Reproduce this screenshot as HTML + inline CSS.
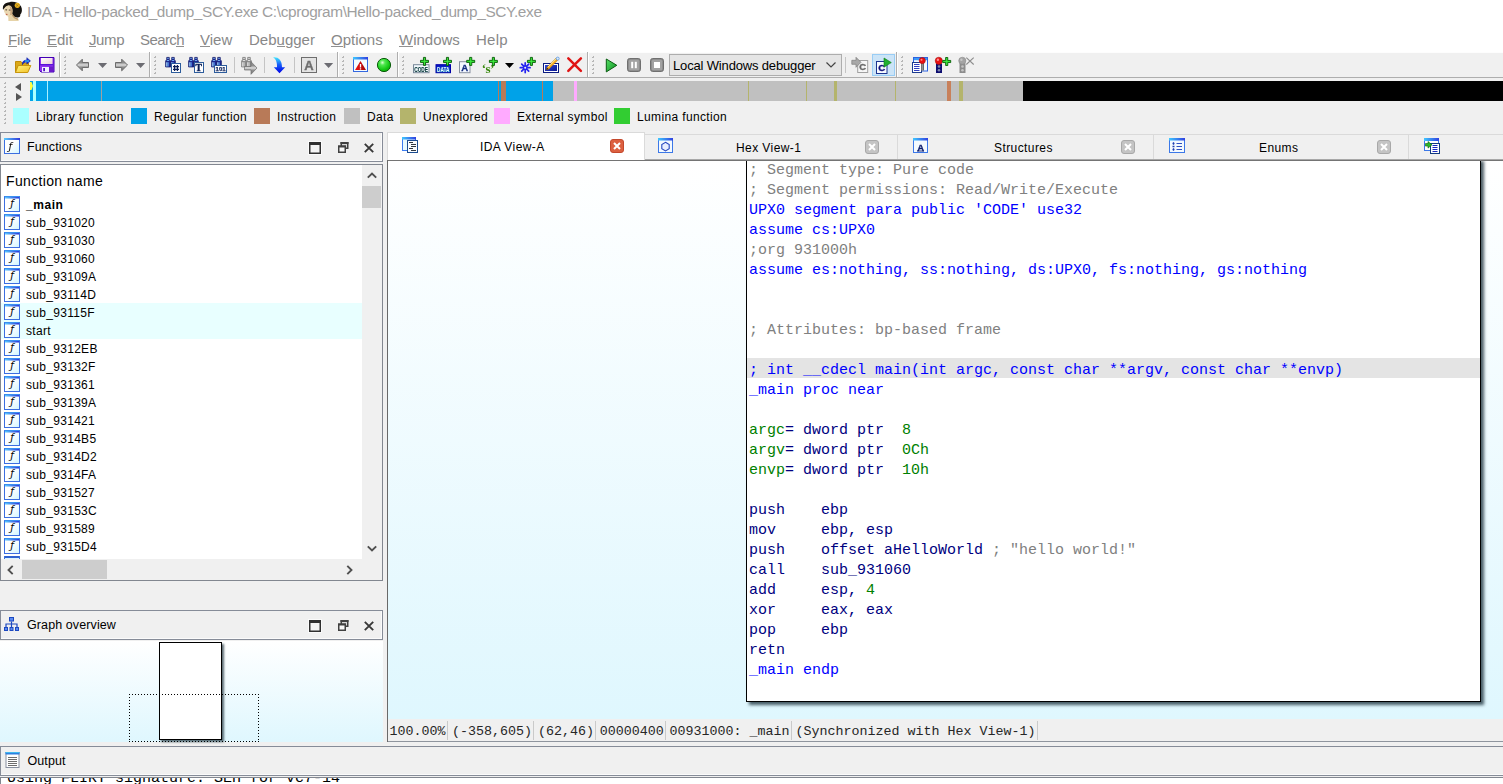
<!DOCTYPE html>
<html lang="en">
<head>
<meta charset="utf-8">
<title>IDA - Hello-packed_dump_SCY.exe</title>
<style>
*{box-sizing:border-box;margin:0;padding:0}
html,body{width:1503px;height:784px;overflow:hidden;background:#f0f0f0}
body{position:relative;font-family:"Liberation Sans",sans-serif;font-size:12px;color:#000}
.abs,.abs-c>*{position:absolute}
svg{display:block;overflow:visible}
#titlebar{left:0;top:0;width:1503px;height:30px;background:#fff}
#title{left:27px;top:3px;font-size:15.400px;line-height:18px;color:#a0a0a0;white-space:nowrap;letter-spacing:-0.37px}
#menubar{left:0;top:30px;width:1503px;height:22px;background:#fff}
.mi{position:absolute;top:1px;font-size:15px;line-height:18px;color:#888;white-space:nowrap}
.mi u{text-decoration:none;background:linear-gradient(#909090,#909090) 0 calc(100% - 1px)/100% 1px no-repeat}
#toolbar{left:0;top:52px;width:1503px;height:26px;background:#f0f0f0;border-top:1px solid #fdfdfd;border-bottom:1px solid #aeaeae}
.grip{position:absolute;width:3px;background:linear-gradient(135deg,transparent 0,transparent 35%,#b0b0b0 35%,#cccccc 100%) 0 0/3px 4px repeat-y;background-size:3px 4px}
.grip::after{content:'';position:absolute;left:0;top:0;width:3px;height:100%;background:repeating-linear-gradient(to bottom,transparent 0,transparent 2px,#f0f0f0 2px,#f0f0f0 4px)}
.tsep{position:absolute;top:52px;width:2px;height:25px;border-left:1px solid #aeaeae;border-right:1px solid #fff}
.isep{position:absolute;top:57px;width:1px;height:16px;background:#c4c4c4}
.ic{position:absolute;width:16px;height:16px}
#navband{left:30px;top:81px;width:1473px;height:20px;background:#c0c0c0}
#navband i{position:absolute;top:0;height:20px;display:block}
.lg{position:absolute;top:108px;width:16px;height:16px}
.lt{position:absolute;top:109px;font-size:12px;line-height:16px;white-space:nowrap;letter-spacing:0.36px}
.phead{position:absolute;height:30px;background:#f0f0f0;border:1px solid #868c98;box-shadow:inset -1px -1px 0 #fbfbfb}
.ptitle{position:absolute;left:26px;top:6px;font-size:12.5px;line-height:16px;white-space:nowrap;letter-spacing:0.1px}
#funcs{left:0;top:164px;width:383px;height:417px;background:#fff;border:1px solid #828790}
#fhead{left:6px;top:172px;font-size:14px;line-height:18px;white-space:nowrap;letter-spacing:0.35px}
.fr{position:absolute;left:1px;width:361px;height:18px}
.fr span{position:absolute;left:25px;top:2px;font-size:12px;line-height:16px;white-space:nowrap;letter-spacing:0.3px}
.fi{position:absolute;left:3px;top:1px;width:16px;height:16px;border:1px solid #3c6ee0;border-top-color:#3a90f0;background:linear-gradient(90deg,#58ccff,#3038d8) 0 0/100% 1px no-repeat,linear-gradient(90deg,#b0e6ff,#8090ec) 0 1px/100% 1px no-repeat,linear-gradient(135deg,#fff 45%,#d0f5ff);font-family:"DejaVu Sans","Liberation Sans",sans-serif;font-style:italic;font-weight:normal;font-size:10.500px;line-height:12px;text-align:center;color:#080808;overflow:hidden;padding-left:0}
.sb{position:absolute;background:#f0f0f0}
.thumb{position:absolute;background:#cdcdcd}
.code{font-family:"Liberation Mono",monospace;font-size:15px;line-height:20px;white-space:pre}
.g{color:#808080}.b{color:#0000ff}.n{color:#000080}.k{color:#008000}
#gview{left:388px;top:161px;width:1115px;height:558px;background:linear-gradient(#ffffff,#dff7fe);overflow:hidden}
#node{left:358px;top:-3px;width:735px;height:544px;background:#fff;border:1px solid #000;box-shadow:3px 3px 3px rgba(30,50,60,.78)}
#hl{left:0;top:199px;width:733px;height:20px;background:#e4e4e4}
#codetxt{left:2px;top:1px;transform:translateY(0.5px)}
#status{left:388px;top:719px;width:1115px;height:23px;background:#f0f0f0;border-bottom:1px solid #8f959e;font-family:"Liberation Mono",monospace;font-size:13.33px;line-height:25px;white-space:pre;color:#262626}
#status span{position:absolute;top:0}
#status i{position:absolute;top:2px;width:1px;height:19px;background:#cacaca}
.tab{position:absolute;top:134px;height:25px;background:#f0f0f0;border-top:1px solid #dadada;border-right:1px solid #dadada}
.tab span,.atab span{position:absolute;top:5px;font-size:12px;line-height:16px;white-space:nowrap;letter-spacing:0.42px}
.atab{position:absolute;top:132px;height:28px;background:#fff;border-top:1px solid #dadada;border-right:1px solid #dadada}
.cb{position:absolute;width:14px;height:14px;border-radius:3px;background:#c3c3c3;border:1px solid #a9a9a9}
</style>
</head>
<body>
<div id="titlebar" class="abs"></div>
<svg class="abs" style="left:0px;top:0px" width="24" height="24" viewBox="0 0 24 24"><path d="M3.500 9c-1.500-3.500 1.500-6.500 6-6.800c4-1 9 .3 11.500 4c1.500 3 1.200 6.500-.8 8.500c.5 1.500-1 3.300-3.200 2.800l-5-1l-6-3z" fill="#15120f"/><path d="M3.800 9.500c.3-3 2.500-4.500 5-4.300c2.500.3 4 2.500 3.800 6c-.2 3-1.500 5.300-3.600 5.500c-2.400.2-4.800-3.500-5.200-7.200z" fill="#ead8b2"/><path d="M9.500 6c2 .8 3 2.800 2.900 5.500c-.2 2.500-1.200 4.500-2.900 5c1-2 1.500-7-0-10.500z" fill="#c9a57c"/><path d="M8.300 16c1.500-.3 3-1.300 3.800-2.800c.8 2.500 3 4.300 6.300 5.300l.3 2.500h-10.300z" fill="#e6d3a8"/><path d="M12 13.500c1 2.300 2.800 4 5.800 5l.4 1.500c-3-.5-5.500-2.500-6.800-5.500z" fill="#b8946a"/><path d="M3 9.500c-.8-3.500 2-6.500 6.500-6.500c2 0 3.500.8 4 2.500c-2.500-1-5-.8-7 .5c-1.500 1-2.500 2.300-3.500 3.500z" fill="#15120f"/><ellipse cx="6.200" cy="9.800" rx="1" ry=".6" fill="#4a3a2c"/><ellipse cx="9.600" cy="10" rx="1" ry=".6" fill="#4a3a2c"/><ellipse cx="6.700" cy="14.200" rx=".9" ry=".5" fill="#b8402c"/><circle cx="17.300" cy="5.300" r="2.600" fill="#e6ae1e"/><path d="M16 4.200l2.300 2.300M18.300 4.300l-2 2.300" stroke="#9a7210" stroke-width=".7"/></svg>
<div id="title" class="abs">IDA - Hello-packed_dump_SCY.exe C:\cprogram\Hello-packed_dump_SCY.exe</div>
<div id="menubar" class="abs">
<span class="mi" style="left:8px;letter-spacing:-0.3px"><u>F</u>ile</span>
<span class="mi" style="left:47px;letter-spacing:0px"><u>E</u>dit</span>
<span class="mi" style="left:89px;letter-spacing:-0.4px"><u>J</u>ump</span>
<span class="mi" style="left:140px;letter-spacing:-0.58px">Searc<u>h</u></span>
<span class="mi" style="left:200px;letter-spacing:0px"><u>V</u>iew</span>
<span class="mi" style="left:249px;letter-spacing:0px">Deb<u>u</u>gger</span>
<span class="mi" style="left:331px;letter-spacing:0px"><u>O</u>ptions</span>
<span class="mi" style="left:399px;letter-spacing:0px"><u>W</u>indows</span>
<span class="mi" style="left:476px;letter-spacing:0.27px">Help</span>
</div>
<div id="toolbar" class="abs"></div>
<div class="grip" style="left:3px;top:56px;height:18px"></div>
<div class="grip" style="left:63px;top:56px;height:18px"></div>
<div class="grip" style="left:153px;top:56px;height:18px"></div>
<div class="grip" style="left:341px;top:56px;height:18px"></div>
<div class="grip" style="left:401px;top:56px;height:18px"></div>
<div class="grip" style="left:591px;top:56px;height:18px"></div>
<div class="grip" style="left:900px;top:56px;height:18px"></div>
<div class="grip" style="left:3px;top:82px;height:42px"></div>
<div class="tsep" style="left:59px"></div>
<div class="tsep" style="left:149px"></div>
<div class="tsep" style="left:337px"></div>
<div class="tsep" style="left:397px"></div>
<div class="tsep" style="left:587px"></div>
<div class="tsep" style="left:896px"></div>
<div class="isep" style="left:234px"></div>
<div class="isep" style="left:264px"></div>
<div class="isep" style="left:294px"></div>
<div class="isep" style="left:845px"></div>
<svg class="abs" style="left:15px;top:57px" width="17" height="17" viewBox="0 0 17 17"><defs><linearGradient id="gfo" x1="0" y1="0" x2="1" y2="1"><stop offset="0" stop-color="#fff27a"/><stop offset="1" stop-color="#f2c22a"/></linearGradient></defs><path d="M0.500 4.500h5.500l1 1.500h6.500v2.500h-10.500l-2.500 7z" fill="#dba818" stroke="#c08c08" stroke-width="1"/><path d="M3.200 8.500h12.600l-3 7h-12.300z" fill="url(#gfo)" stroke="#c8960c" stroke-width="1"/><path d="M7.300 7.800c-.4-3 1.700-4.800 4.500-4.800v-2.300l3.700 3.200l-3.700 3.200v-2.200c-1.800-.1-3.300.8-4.500 2.900z" fill="#1430d8" stroke="#0c1c98" stroke-width=".5"/><path d="M10 4h4" stroke="#40e8ff" stroke-width="1"/></svg>
<svg class="abs" style="left:39px;top:57px" width="16" height="16" viewBox="0 0 16 16"><defs><linearGradient id="gsv" x1="0" y1="0" x2="1" y2="1"><stop offset="0" stop-color="#ffffff"/><stop offset="1" stop-color="#ecd0d4"/></linearGradient></defs><path d="M0.500 0.500h14.500v14.500h-13l-1.500-1.500z" fill="#9030f0" stroke="#4200b4" stroke-width="1"/><rect x="2" y="1" width="11.500" height="6" fill="url(#gsv)"/><rect x="1" y="7" width="13.500" height="1.300" fill="#5a14d8"/><rect x="10" y="9.500" width="4.300" height="5" fill="#6a1cc8"/><rect x="3" y="10" width="7" height="5" fill="#f2f0ff"/><rect x="4.200" y="11" width="1.800" height="3.200" fill="#5010c0"/></svg>
<svg class="abs" style="left:76px;top:57px" width="14" height="16" viewBox="0 0 14 16"><defs><linearGradient id="gar" x1="0" y1="0" x2="0" y2="1"><stop offset="0" stop-color="#8e8e8e"/><stop offset=".3" stop-color="#8e8e8e"/><stop offset=".5" stop-color="#dcdcdc"/><stop offset=".68" stop-color="#909090"/><stop offset="1" stop-color="#7a7a7a"/></linearGradient></defs><path d="M0.500 8l5.800-5.800v3.300h6.200v5h-6.200v3.300z" fill="url(#gar)" stroke="#6c6c6c" stroke-width="1" stroke-linejoin="miter"/></svg>
<svg class="abs" style="left:98px;top:57px" width="9" height="16" viewBox="0 0 9 16"><path d="M0 5.900h9.200l-4.600 5.200z" fill="#6c6c72"/></svg>
<svg class="abs" style="left:114px;top:57px" width="14" height="16" viewBox="0 0 14 16"><path d="M13.500 8l-5.800-5.800v3.300h-6.200v5h6.200v3.300z" fill="url(#gar)" stroke="#6c6c6c" stroke-width="1"/></svg>
<svg class="abs" style="left:136px;top:57px" width="9" height="16" viewBox="0 0 9 16"><path d="M0 5.900h9.200l-4.600 5.200z" fill="#6c6c72"/></svg>
<svg class="abs" style="left:165px;top:57px" width="16" height="16" viewBox="0 0 16 16"><g fill="#1c2890" stroke="#101868" stroke-width=".7" stroke-linejoin="round"><path d="M1.700 0.400h2.600v2l1.100 1.600v6h-4.800v-6l1.100-1.600z"/><path d="M6.700 0.400h2.600v2l1.100 1.600v6h-4.800v-6l1.100-1.600z"/></g><path d="M2.300 1.500h1.400M7.300 1.500h1.400M1.800 3.500h2.400M6.800 3.500h2.400" stroke="#7ab8f8" stroke-width=".9"/><path d="M1.900 5.200v4.300M6.900 5.200v4.300" stroke="#a8dcff" stroke-width="1.300"/><path d="M3.300 5.200v4.300M8.300 5.200v4.300" stroke="#4a80e0" stroke-width="1.100"/><rect x="6.5" y="6.5" width="9" height="9" fill="#fff" stroke="#2c5c9c" stroke-width="1"/><path d="M9.600 8v6M12.400 8v6M8 9.600h6M8 12.400h6" stroke="#0c2058" stroke-width="1.300"/></svg>
<svg class="abs" style="left:188px;top:57px;will-change:transform" width="16" height="16" viewBox="0 0 16 16"><g fill="#1c2890" stroke="#101868" stroke-width=".7" stroke-linejoin="round"><path d="M1.700 0.400h2.600v2l1.100 1.600v6h-4.800v-6l1.100-1.600z"/><path d="M6.700 0.400h2.600v2l1.100 1.600v6h-4.800v-6l1.100-1.600z"/></g><path d="M2.300 1.500h1.400M7.300 1.500h1.400M1.800 3.500h2.400M6.800 3.500h2.400" stroke="#7ab8f8" stroke-width=".9"/><path d="M1.900 5.200v4.300M6.900 5.200v4.300" stroke="#a8dcff" stroke-width="1.300"/><path d="M3.300 5.200v4.300M8.300 5.200v4.300" stroke="#4a80e0" stroke-width="1.100"/><rect x="6.5" y="5.5" width="9" height="10" fill="#fff" stroke="#2c5c9c" stroke-width="1"/><text x="7.6" y="14.3" font-family="Liberation Serif,sans-serif" font-size="9.5" font-weight="bold" fill="#0c2058" stroke="#0c2058" stroke-width=".45">T</text></svg>
<svg class="abs" style="left:211px;top:57px;will-change:transform" width="16" height="16" viewBox="0 0 16 16"><g fill="#1c2890" stroke="#101868" stroke-width=".7" stroke-linejoin="round"><path d="M1.700 0.400h2.600v2l1.100 1.600v6h-4.800v-6l1.100-1.600z"/><path d="M6.700 0.400h2.600v2l1.100 1.600v6h-4.800v-6l1.100-1.600z"/></g><path d="M2.300 1.500h1.400M7.300 1.500h1.400M1.800 3.500h2.400M6.800 3.500h2.400" stroke="#7ab8f8" stroke-width=".9"/><path d="M1.900 5.200v4.300M6.900 5.200v4.300" stroke="#a8dcff" stroke-width="1.300"/><path d="M3.300 5.200v4.300M8.300 5.200v4.300" stroke="#4a80e0" stroke-width="1.100"/><rect x="3.5" y="8.5" width="12" height="7" fill="#fff" stroke="#2c5c9c" stroke-width="1"/><text x="4.6" y="14.3" font-family="Liberation Sans,sans-serif" font-size="6.2" font-weight="bold" fill="#0c2058" textLength="10" lengthAdjust="spacingAndGlyphs" stroke="#0c2058" stroke-width=".25">101</text></svg>
<svg class="abs" style="left:241px;top:57px" width="16" height="16" viewBox="0 0 16 16"><g fill="#8c8c8c" stroke="#7a7a7a" stroke-width=".7" stroke-linejoin="round"><path d="M1.700 0.400h2.600v2l1.100 1.600v6h-4.800v-6l1.100-1.600z"/><path d="M6.700 0.400h2.600v2l1.100 1.600v6h-4.800v-6l1.100-1.600z"/></g><path d="M2.300 1.500h1.400M7.300 1.500h1.400M1.800 3.500h2.400M6.800 3.500h2.400" stroke="#e8e8e8" stroke-width=".9"/><path d="M1.900 5.200v4.300M6.900 5.200v4.300" stroke="#ececec" stroke-width="1.300"/><path d="M3.300 5.200v4.300M8.300 5.200v4.300" stroke="#bcbcbc" stroke-width="1.100"/><path d="M3.500 9.500h6.500v-4.800l6 6.300l-6 6.300v-4.300h-6.500z" fill="url(#gar)" stroke="#6e6e6e" stroke-width=".7"/><path d="M4.500 10.500h6" stroke="#d0d0d0" stroke-width="1"/></svg>
<svg class="abs" style="left:271px;top:57px" width="16" height="16" viewBox="0 0 16 16"><defs><linearGradient id="gd" x1="0" y1="0" x2="0" y2="1"><stop offset="0" stop-color="#40e8ff"/><stop offset=".45" stop-color="#1860f8"/><stop offset="1" stop-color="#0000e8"/></linearGradient></defs><path d="M2 0.300c5.500-.5 9 2.700 9 10h3.200l-5.700 5.900l-5.700-5.900h3.200c.2-4.500-.8-8-4-10z" fill="url(#gd)"/></svg>
<svg class="abs" style="left:301px;top:57px;will-change:transform" width="16" height="16" viewBox="0 0 16 16"><rect x=".5" y=".5" width="15" height="15" fill="#e4e4e4" stroke="#6e6e6e"/><text x="3.2" y="13.2" font-family="Liberation Sans,sans-serif" font-size="13" font-weight="bold" fill="#6e6e6e" stroke="#6e6e6e" stroke-width=".35">A</text></svg>
<svg class="abs" style="left:324px;top:57px" width="9" height="16" viewBox="0 0 9 16"><path d="M0 5.900h9.200l-4.600 5.200z" fill="#6c6c72"/></svg>
<svg class="abs" style="left:353px;top:57px" width="16" height="16" viewBox="0 0 16 16"><defs><linearGradient id="gwr" x1="0" y1="0" x2="1" y2="0"><stop offset="0" stop-color="#f41010"/><stop offset="1" stop-color="#a00808"/></linearGradient></defs><rect x=".5" y=".5" width="14" height="14" fill="#f4fcff" stroke="#3468e0"/><rect x="0" y="0" width="15" height="2.500" fill="url(#gti)"/><path d="M7.500 4l5.500 9h-11z" fill="url(#gwr)"/><path d="M7.500 7v3.400M7.500 11.300v1.200" stroke="#fff" stroke-width="1.300"/></svg>
<svg class="abs" style="left:376px;top:57px" width="16" height="16" viewBox="0 0 16 16"><defs><radialGradient id="gb" cx=".38" cy=".32" r=".75"><stop offset="0" stop-color="#d8ffd0"/><stop offset=".25" stop-color="#50e850"/><stop offset=".7" stop-color="#14c814"/><stop offset="1" stop-color="#0ca00c"/></radialGradient></defs><circle cx="8" cy="8" r="6.600" fill="url(#gb)" stroke="#0a5c0a" stroke-width="1"/></svg>
<svg class="abs" style="left:413px;top:57px;will-change:transform" width="17" height="16" viewBox="0 0 17 16"><rect x=".5" y="7.700" width="15.500" height="8" fill="#f4faff" stroke="#788898"/><text x="1.2" y="14.6" font-family="Liberation Sans,sans-serif" font-size="7" font-weight="bold" fill="#003434" textLength="13.800" lengthAdjust="spacingAndGlyphs" stroke="#003434" stroke-width=".12">CODE</text><path d="M10.45 0.40000000000000036h2.1v2.95h2.95v2.1h-2.95v2.95h-2.1v-2.95h-2.95v-2.1h2.95z" fill="#1cc41c" stroke="#085c08" stroke-width=".9" stroke-linejoin="round"/><path d="M11.5 1.0000000000000004v6.8M8.1 4.4h6.8" stroke="#44ea44" stroke-width=".8"/></svg>
<svg class="abs" style="left:435px;top:57px;will-change:transform" width="17" height="16" viewBox="0 0 17 16"><defs><linearGradient id="gdt" x1="0" y1="0" x2="0" y2="1"><stop offset="0" stop-color="#0808c8"/><stop offset="1" stop-color="#1078b8"/></linearGradient></defs><rect x="1" y="7.700" width="14.500" height="8" fill="url(#gdt)" stroke="#0000a8"/><text x="2" y="14.5" font-family="Liberation Sans,sans-serif" font-size="6.8" font-weight="bold" fill="#e8ffff" textLength="12.500" lengthAdjust="spacingAndGlyphs">DATA</text><path d="M11.45 0.40000000000000036h2.1v2.95h2.95v2.1h-2.95v2.95h-2.1v-2.95h-2.95v-2.1h2.95z" fill="#1cc41c" stroke="#085c08" stroke-width=".9" stroke-linejoin="round"/><path d="M12.5 1.0000000000000004v6.8M9.1 4.4h6.8" stroke="#44ea44" stroke-width=".8"/></svg>
<svg class="abs" style="left:459px;top:57px;will-change:transform" width="17" height="16" viewBox="0 0 17 16"><rect x=".5" y="4.700" width="10.500" height="11" fill="#f4f8ff" stroke="#8890a0"/><text x="2.3" y="14.3" font-family="Liberation Sans,sans-serif" font-size="9.5" font-weight="bold" fill="#142c80" stroke="#142c80" stroke-width=".3">A</text><path d="M10.649999999999999 0.40000000000000036h2.1v2.95h2.95v2.1h-2.95v2.95h-2.1v-2.95h-2.95v-2.1h2.95z" fill="#1cc41c" stroke="#085c08" stroke-width=".9" stroke-linejoin="round"/><path d="M11.7 1.0000000000000004v6.8M8.299999999999999 4.4h6.8" stroke="#44ea44" stroke-width=".8"/></svg>
<svg class="abs" style="left:482px;top:57px;will-change:transform" width="17" height="16" viewBox="0 0 17 16"><text x="-0.2" y="15.8" font-family="Liberation Serif,sans-serif" font-size="13" font-weight="bold" fill="#3a8a10" textLength="12.600" lengthAdjust="spacing">‘s’</text><path d="M10.35 0.40000000000000036h2.1v2.95h2.95v2.1h-2.95v2.95h-2.1v-2.95h-2.95v-2.1h2.95z" fill="#1cc41c" stroke="#085c08" stroke-width=".9" stroke-linejoin="round"/><path d="M11.4 1.0000000000000004v6.8M8.0 4.4h6.8" stroke="#44ea44" stroke-width=".8"/></svg>
<svg class="abs" style="left:505px;top:57px" width="9" height="16" viewBox="0 0 9 16"><path d="M0 6h9l-4.500 5z" fill="#000"/></svg>
<svg class="abs" style="left:519px;top:57px" width="17" height="16" viewBox="0 0 17 16"><g stroke="#2424f0" stroke-width="1.700" stroke-linecap="round"><path d="M6.200 5.800v9.800M1.300 10.700h9.800M2.700 7.200l7 7M9.700 7.200l-7 7"/></g><circle cx="6.200" cy="10.700" r="1" fill="#f0f0f0"/><path d="M11.35 0.40000000000000036h2.1v2.95h2.95v2.1h-2.95v2.95h-2.1v-2.95h-2.95v-2.1h2.95z" fill="#1cc41c" stroke="#085c08" stroke-width=".9" stroke-linejoin="round"/><path d="M12.4 1.0000000000000004v6.8M9.0 4.4h6.8" stroke="#44ea44" stroke-width=".8"/></svg>
<svg class="abs" style="left:543px;top:57px" width="17" height="17" viewBox="0 0 17 17"><defs><linearGradient id="gpn" x1="0" y1="0" x2="1" y2="1"><stop offset="0" stop-color="#3048d8"/><stop offset="1" stop-color="#0c1890"/></linearGradient></defs><rect x=".5" y="6.500" width="15" height="9" fill="#fff" stroke="#0c1c80"/><rect x="2" y="8" width="12" height="6" fill="url(#gpn)"/><path d="M3.300 12.800l.9-2.700l8.800-8.800l1.800 1.800l-8.800 8.800z" fill="#f8a818" stroke="#b87808" stroke-width=".5"/><path d="M5 10.200l8.300-8.300" stroke="#fff4b0" stroke-width=".9"/><circle cx="14.700" cy="1.600" r="1.500" fill="#d8ecff" stroke="#4888d8" stroke-width=".7"/><path d="M3.300 12.800l.8-2l1.200 1.200z" fill="#101010"/></svg>
<svg class="abs" style="left:567px;top:57px" width="16" height="16" viewBox="0 0 16 16"><path d="M1.300 1.300l12.600 12.600M13.900 1.300l-12.600 12.600" stroke="#e01414" stroke-width="2.500" stroke-linecap="round"/></svg>
<svg class="abs" style="left:603px;top:57px" width="16" height="16" viewBox="0 0 16 16"><defs><linearGradient id="gpl" x1="0" y1="0" x2="1" y2="1"><stop offset="0" stop-color="#58e068"/><stop offset="1" stop-color="#0c9020"/></linearGradient></defs><path d="M3.300 2l10.500 6.300l-10.500 6.600z" fill="url(#gpl)" stroke="#0a5c12" stroke-width="1" stroke-linejoin="round"/></svg>
<svg class="abs" style="left:626px;top:57px" width="16" height="16" viewBox="0 0 16 16"><rect x="1.500" y="1.500" width="13" height="13" rx="2.200" fill="#8a8a8a" stroke="#707070"/><rect x="2.800" y="2.800" width="10.400" height="10.400" rx="1.500" fill="#a2a2a2"/><rect x="5.200" y="4.800" width="2" height="6.400" fill="#fff"/><rect x="8.800" y="4.800" width="2" height="6.400" fill="#fff"/></svg>
<svg class="abs" style="left:649px;top:57px" width="16" height="16" viewBox="0 0 16 16"><rect x="1.500" y="1.500" width="13" height="13" rx="2.200" fill="#8a8a8a" stroke="#707070"/><rect x="2.800" y="2.800" width="10.400" height="10.400" rx="1.500" fill="#a2a2a2"/><rect x="5" y="5" width="6" height="6" fill="#fff"/></svg>
<svg class="abs" style="left:851px;top:57px;will-change:transform" width="18" height="16" viewBox="0 0 18 16"><rect x="6.700" y="3.500" width="10" height="12" fill="#f6f6f6" stroke="#a0a0a0"/><text x="8.3" y="13.3" font-family="Liberation Sans,sans-serif" font-size="9.5" font-weight="bold" fill="#686868" stroke="#686868" stroke-width=".4">C</text><path d="M0.800 3.300h4.200v-3l5 5l-5 5v-3h-4.200z" fill="#a8a8a8" stroke="#7c7c7c" stroke-width=".7"/></svg>
<svg class="abs" style="left:872px;top:57px;will-change:transform" width="24" height="20" viewBox="0 0 24 20"><rect x=".5" y="-2.500" width="22" height="21" fill="#cce4f7" stroke="#99cdf5"/><rect x="4.500" y="4.500" width="10.500" height="12" fill="#f8fbff" stroke="#1c3490"/><text x="6.2" y="14.3" font-family="Liberation Sans,sans-serif" font-size="9.8" font-weight="bold" fill="#0c0c78" stroke="#0c0c78" stroke-width=".35">C</text><path d="M12 1l7.300 4.600l-7.300 4.600z" fill="#20b030" stroke="#0a7a14" stroke-width=".6" stroke-linejoin="round"/></svg>
<svg class="abs" style="left:912px;top:57px" width="17" height="16" viewBox="0 0 17 16"><rect x="1.500" y=".5" width="14" height="13.500" fill="#f4f9ff" stroke="#2c62e0"/><rect x="2" y="1" width="13" height="2.200" fill="#3a9af8"/><rect x=".5" y="5.500" width="9" height="10" fill="#fff" stroke="#1c3c90"/><path d="M2 7.500h5.500M2 9.500h5.500M2 11.500h5.500M2 13.500h5.500" stroke="#1828b8" stroke-width=".9"/><rect x="9" y="6" width="3" height="7.500" fill="#686868"/><rect x="9.800" y="6" width="1" height="7.500" fill="#a0a0a0"/><circle cx="10.300" cy="3.600" r="3.100" fill="#e81010" stroke="#a00808" stroke-width=".5"/><circle cx="9.500" cy="2.700" r="1" fill="#ff8c8c"/></svg>
<svg class="abs" style="left:935px;top:57px" width="17" height="16" viewBox="0 0 17 16"><rect x="1" y="6.500" width="6" height="9.500" fill="#0c0c70"/><circle cx="4" cy="9.500" r="1.300" fill="#8088a8"/><circle cx="4" cy="13.300" r="1.300" fill="#8088a8"/><circle cx="3.800" cy="3.800" r="3.600" fill="#e81010" stroke="#a00808" stroke-width=".5"/><circle cx="2.900" cy="2.700" r="1.200" fill="#ff8c8c"/><path d="M10.649999999999999 0.5h2.1v2.95h2.95v2.1h-2.95v2.95h-2.1v-2.95h-2.95v-2.1h2.95z" fill="#1cc41c" stroke="#085c08" stroke-width=".9" stroke-linejoin="round"/><path d="M11.7 1.1v6.8M8.299999999999999 4.5h6.8" stroke="#44ea44" stroke-width=".8"/></svg>
<svg class="abs" style="left:958px;top:57px" width="17" height="16" viewBox="0 0 17 16"><rect x="1.500" y="6.500" width="6" height="9.500" fill="#8c8c8c"/><circle cx="4.500" cy="9.500" r="1.300" fill="#c4c4c4"/><circle cx="4.500" cy="13.300" r="1.300" fill="#c4c4c4"/><circle cx="4.300" cy="3.800" r="3.600" fill="#a4a4a4" stroke="#808080" stroke-width=".5"/><circle cx="3.400" cy="2.700" r="1.200" fill="#c8c8c8"/><path d="M8.300 0.700l7.400 6.800M15.700 0.700l-7.400 6.800" stroke="#8c8c8c" stroke-width="1.100"/></svg>
<div class="abs" style="left:669px;top:54px;width:173px;height:22px;background:#e5e5e5;border:1px solid #adadad"></div>
<div class="abs" id="combotxt" style="left:673px;top:57.500px;font-size:13px;line-height:16px;white-space:nowrap;letter-spacing:-0.16px">Local Windows debugger</div>
<svg class="abs" style="left:825px;top:61px" width="12" height="8" viewBox="0 0 12 8"><path d="M1.5 1.5 L6 6 L10.5 1.5" fill="none" stroke="#444" stroke-width="1.2"/></svg>
<svg class="abs" style="left:14px;top:82px" width="10" height="20" viewBox="0 0 10 20"><path d="M7 1 L7 9 L1 5Z M2 11 L2 19 L8 15Z" fill="#555"/></svg>
<div id="navband" class="abs">
<i style="left:0px;width:523px;background:#00a2e8"></i>
<i style="left:3px;width:3px;background:#aaffff"></i>
<i style="left:17px;width:1px;background:#a8f0ff"></i>
<i style="left:71px;width:1px;background:#a0a0a0"></i>
<i style="left:468px;width:1px;background:#b87a58"></i>
<i style="left:471px;width:5px;background:#b87a58"></i>
<i style="left:512px;width:1px;background:#b87a58"></i>
<i style="left:544px;width:3px;background:#ffaaff"></i>
<i style="left:718px;width:1px;background:#b4b46c"></i>
<i style="left:776px;width:1px;background:#b4b46c"></i>
<i style="left:804px;width:3px;background:#b4b46c"></i>
<i style="left:865px;width:1px;background:#b4b46c"></i>
<i style="left:917px;width:4px;background:#c8805a"></i>
<i style="left:929px;width:4px;background:#b4b46c"></i>
<i style="left:993px;width:480px;background:#000"></i>
</div>
<svg class="abs" style="left:30px;top:82px" width="4" height="9" viewBox="0 0 4 9"><path d="M0 0 L1.5 0 L3 4 L1.5 8 L0 8Z" fill="#ffff40"/></svg>
<div class="lg" style="left:13px;background:#aaffff"></div><div class="lt" style="left:36px">Library function</div>
<div class="lg" style="left:131px;background:#00a2e8"></div><div class="lt" style="left:154px">Regular function</div>
<div class="lg" style="left:254px;background:#b87a58"></div><div class="lt" style="left:277px">Instruction</div>
<div class="lg" style="left:344px;background:#c0c0c0"></div><div class="lt" style="left:367px">Data</div>
<div class="lg" style="left:400px;background:#b4b46c"></div><div class="lt" style="left:423px">Unexplored</div>
<div class="lg" style="left:494px;background:#ffaaff"></div><div class="lt" style="left:517px">External symbol</div>
<div class="lg" style="left:614px;background:#32cd32"></div><div class="lt" style="left:637px">Lumina function</div>
<div class="phead" style="left:0px;top:132px;width:383px"><svg class="abs" style="left:3px;top:5px;will-change:transform" width="16" height="16" viewBox="0 0 16 16"><defs><linearGradient id="gfi" x1="0" y1="0" x2="1" y2="0"><stop offset="0" stop-color="#58ccff"/><stop offset="1" stop-color="#3038d8"/></linearGradient><linearGradient id="gfb" x1="0" y1="0" x2="1" y2="1"><stop offset=".45" stop-color="#fff"/><stop offset="1" stop-color="#d0f5ff"/></linearGradient></defs><rect x=".5" y=".5" width="15" height="15" fill="url(#gfb)" stroke="#3c6ee0"/><rect x="0" y="0" width="16" height="2" fill="url(#gfi)"/><text x="4.6" y="12.3" font-family="DejaVu Sans,sans-serif" font-size="10.5" font-weight="normal" fill="#080808" font-style="italic">ƒ</text></svg><div class="ptitle">Functions</div><svg class="abs" style="left:308px;top:9px" width="12" height="12" viewBox="0 0 12 12"><rect x="-1" y="-1" width="14" height="14" fill="#fafafa"/><rect x=".75" y=".75" width="10.500" height="10.500" fill="#f4f4f4" stroke="#303030" stroke-width="1.500"/><rect x="0" y="0" width="12" height="3" fill="#303030"/></svg><svg class="abs" style="left:337px;top:9px" width="11" height="11" viewBox="0 0 11 11"><rect x="3.250" y=".75" width="6.500" height="5.500" fill="#d8d8d8" stroke="#404040" stroke-width="1.500"/><rect x="2.500" y="0" width="8" height="2" fill="#404040"/><rect x=".75" y="4.250" width="6.500" height="6" fill="#f8f8f8" stroke="#404040" stroke-width="1.500"/><rect x="0" y="3.500" width="8" height="2" fill="#404040"/></svg><svg class="abs" style="left:363px;top:10px" width="10" height="10" viewBox="0 0 10 10"><path d="M0.800 0.800l8.400 8.400M9.200 0.800l-8.400 8.400" stroke="#383838" stroke-width="1.900"/></svg></div>
<div id="funcs" class="abs"></div>
<div id="fhead" class="abs">Function name</div>
<div class="fr" style="top:195px"><div class="fi">ƒ</div><span style="font-weight:bold;letter-spacing:0.55px">_main</span></div>
<div class="fr" style="top:213px"><div class="fi">ƒ</div><span>sub_931020</span></div>
<div class="fr" style="top:231px"><div class="fi">ƒ</div><span>sub_931030</span></div>
<div class="fr" style="top:249px"><div class="fi">ƒ</div><span>sub_931060</span></div>
<div class="fr" style="top:267px"><div class="fi">ƒ</div><span>sub_93109A</span></div>
<div class="fr" style="top:285px"><div class="fi">ƒ</div><span>sub_93114D</span></div>
<div class="fr" style="top:303px;background:#e8ffff"><div class="fi">ƒ</div><span>sub_93115F</span></div>
<div class="fr" style="top:321px;background:#e8ffff"><div class="fi">ƒ</div><span>start</span></div>
<div class="fr" style="top:339px"><div class="fi">ƒ</div><span>sub_9312EB</span></div>
<div class="fr" style="top:357px"><div class="fi">ƒ</div><span>sub_93132F</span></div>
<div class="fr" style="top:375px"><div class="fi">ƒ</div><span>sub_931361</span></div>
<div class="fr" style="top:393px"><div class="fi">ƒ</div><span>sub_93139A</span></div>
<div class="fr" style="top:411px"><div class="fi">ƒ</div><span>sub_931421</span></div>
<div class="fr" style="top:429px"><div class="fi">ƒ</div><span>sub_9314B5</span></div>
<div class="fr" style="top:447px"><div class="fi">ƒ</div><span>sub_9314D2</span></div>
<div class="fr" style="top:465px"><div class="fi">ƒ</div><span>sub_9314FA</span></div>
<div class="fr" style="top:483px"><div class="fi">ƒ</div><span>sub_931527</span></div>
<div class="fr" style="top:501px"><div class="fi">ƒ</div><span>sub_93153C</span></div>
<div class="fr" style="top:519px"><div class="fi">ƒ</div><span>sub_931589</span></div>
<div class="fr" style="top:537px"><div class="fi">ƒ</div><span>sub_9315D4</span></div>
<div class="abs" style="left:4px;top:556px;width:16px;height:4px;background:linear-gradient(#2f62d0 0,#2f62d0 2px,#d8f4ff 2px);border-left:1px solid #3a6fd8;border-right:1px solid #3a6fd8"></div>
<div class="sb" style="left:362px;top:165px;width:20px;height:394px"></div>
<div class="thumb" style="left:362px;top:186px;width:19px;height:22px"></div>
<svg class="abs" style="left:366.500px;top:171px" width="10" height="8" viewBox="0 0 10 8"><path d="M0.800 6.700 L5 2.500 L9.200 6.700" fill="none" stroke="#505050" stroke-width="1.900"/></svg>
<svg class="abs" style="left:366.500px;top:545px" width="10" height="8" viewBox="0 0 10 8"><path d="M0.800 1.300 L5 5.500 L9.200 1.300" fill="none" stroke="#505050" stroke-width="1.900"/></svg>
<div class="sb" style="left:1px;top:559px;width:381px;height:21px"></div>
<div class="thumb" style="left:22px;top:560px;width:85px;height:19px"></div>
<svg class="abs" style="left:6px;top:564.500px" width="8" height="10" viewBox="0 0 8 10"><path d="M6.700 0.800 L2.500 5 L6.700 9.200" fill="none" stroke="#505050" stroke-width="1.900"/></svg>
<svg class="abs" style="left:346px;top:564.500px" width="8" height="10" viewBox="0 0 8 10"><path d="M1.300 0.800 L5.500 5 L1.300 9.200" fill="none" stroke="#505050" stroke-width="1.900"/></svg>
<div class="phead" style="left:0px;top:610px;width:383px"><svg class="abs" style="left:3px;top:5px" width="16" height="16" viewBox="0 0 16 16"><g fill="#5a8af0" stroke="#1c48c0" stroke-width="1"><rect x="5.500" y="1.500" width="4" height="3.500"/><rect x=".5" y="11.500" width="3" height="3"/><rect x="6" y="11.500" width="3" height="3"/><rect x="11.500" y="11.500" width="3" height="3"/></g><path d="M7.500 5.500v6M2 11v-3h11v3" fill="none" stroke="#1c48c0" stroke-width="1.200"/></svg><div class="ptitle">Graph overview</div><svg class="abs" style="left:308px;top:9px" width="12" height="12" viewBox="0 0 12 12"><rect x="-1" y="-1" width="14" height="14" fill="#fafafa"/><rect x=".75" y=".75" width="10.500" height="10.500" fill="#f4f4f4" stroke="#303030" stroke-width="1.500"/><rect x="0" y="0" width="12" height="3" fill="#303030"/></svg><svg class="abs" style="left:337px;top:9px" width="11" height="11" viewBox="0 0 11 11"><rect x="3.250" y=".75" width="6.500" height="5.500" fill="#d8d8d8" stroke="#404040" stroke-width="1.500"/><rect x="2.500" y="0" width="8" height="2" fill="#404040"/><rect x=".75" y="4.250" width="6.500" height="6" fill="#f8f8f8" stroke="#404040" stroke-width="1.500"/><rect x="0" y="3.500" width="8" height="2" fill="#404040"/></svg><svg class="abs" style="left:363px;top:10px" width="10" height="10" viewBox="0 0 10 10"><path d="M0.800 0.800l8.400 8.400M9.200 0.800l-8.400 8.400" stroke="#383838" stroke-width="1.900"/></svg></div>
<div class="abs" style="left:0;top:641px;width:383px;height:101px;background:linear-gradient(#ffffff,#dff7fe)"></div>
<div class="abs" style="left:159px;top:642px;width:63px;height:98px;background:#fff;border:1px solid #000;box-shadow:2px 2px 2px rgba(40,60,70,.75)"></div>
<div class="abs" style="left:129px;top:694px;width:130px;height:48px;background:repeating-linear-gradient(90deg,#000 0,#000 1px,transparent 1px,transparent 3px) 0 0/100% 1px no-repeat,repeating-linear-gradient(90deg,#000 0,#000 1px,transparent 1px,transparent 3px) 0 100%/100% 1px no-repeat,repeating-linear-gradient(180deg,#000 0,#000 1px,transparent 1px,transparent 3px) 0 0/1px 100% no-repeat,repeating-linear-gradient(180deg,#000 0,#000 1px,transparent 1px,transparent 3px) 100% 0/1px 100% no-repeat"></div>
<div class="phead" style="left:0;top:746px;width:1506px"><svg class="abs" style="left:4px;top:5px" width="15" height="16" viewBox="0 0 15 16"><rect x="1" y=".5" width="13" height="15" fill="#fff" stroke="#8890a0"/><rect x=".5" y="0" width="14" height="2.500" fill="#2c80e0"/><rect x=".5" y="0" width="14" height="1" fill="#40b8f0"/><path d="M3 5.500h9M3 7.500h9M3 9.500h9M3 11.500h9M3 13.500h9" stroke="#484848" stroke-width=".8"/></svg><div class="ptitle" style="left:26.500px">Output</div></div>
<div class="abs" style="left:0;top:777px;width:1503px;height:7px;background:#fff;border-top:1px solid #828790;border-left:1px solid #828790;overflow:hidden"><div class="code" style="position:absolute;left:6px;top:-9.500px">Using FLIRT signature: SEH for vc7-14</div></div>
<div class="abs" style="left:387px;top:132px;width:1px;height:28px;background:#dadada"></div>
<div class="abs" style="left:387px;top:160px;width:1px;height:582px;background:#696969"></div>
<div class="abs" style="left:388px;top:159px;width:1115px;height:2px;background:#747474;border-top:1px solid #a8a8a8"></div>
<div class="atab" style="left:388px;width:257px"><svg class="abs" style="left:14px;top:4px" width="17" height="17" viewBox="0 0 17 17"><defs><linearGradient id="gti" x1="0" y1="0" x2="1" y2="0"><stop offset="0" stop-color="#40c8ff"/><stop offset="1" stop-color="#3040e0"/></linearGradient></defs><rect x=".5" y=".5" width="13" height="13" fill="#e8faff" stroke="#3c7cf0"/><rect x="0" y="0" width="14" height="2.500" fill="url(#gti)"/><rect x="5.500" y="3.500" width="10" height="12" fill="#fbfdff" stroke="#1c4c90"/><path d="M7 5.500h4M9 7.500h5M9 9.500h5M7 11.500h4M9 13.500h5" stroke="#303840" stroke-width="1"/></svg><span style="left:92px;top:6px">IDA View-A</span><svg class="abs" style="left:222px;top:6px" width="14" height="14" viewBox="0 0 14 14"><rect x=".5" y=".5" width="13" height="13" rx="2.500" fill="#dc6040" stroke="#c4482c"/><path d="M4 4l6 6M10 4l-6 6" stroke="#fff" stroke-width="2"/></svg></div>
<div class="tab" style="left:645px;width:253px"><svg class="abs" style="left:13px;top:3px" width="16" height="16" viewBox="0 0 16 16"><rect x=".5" y=".5" width="14" height="14" fill="#f4faff" stroke="#3c78e8"/><rect x="0" y="0" width="15" height="2.500" fill="url(#gti)"/><path d="M7.500 4.300l3.700 2.200v4.200l-3.700 2.200l-3.700-2.200v-4.200z" fill="#e8eeff" stroke="#2848c0" stroke-width="1.100"/></svg><span style="left:91px">Hex View-1</span><svg class="abs" style="left:220px;top:5px" width="14" height="14" viewBox="0 0 14 14"><rect x=".5" y=".5" width="13" height="13" rx="2.500" fill="#c4c4c4" stroke="#a8a8a8"/><path d="M4 4l6 6M10 4l-6 6" stroke="#fff" stroke-width="2"/></svg></div>
<div class="tab" style="left:898px;width:256px"><svg class="abs" style="left:15px;top:3px;will-change:transform" width="16" height="16" viewBox="0 0 16 16"><rect x=".5" y=".5" width="14" height="14" fill="#f4faff" stroke="#3c78e8"/><rect x="0" y="0" width="15" height="2.500" fill="url(#gti)"/><text x="4.3" y="12.5" font-family="Liberation Sans,sans-serif" font-size="9.5" font-weight="bold" fill="#102070" stroke="#102070" stroke-width=".3">A</text><path d="M4 13h7" stroke="#102070" stroke-width=".9"/></svg><span style="left:96px">Structures</span><svg class="abs" style="left:223px;top:5px" width="14" height="14" viewBox="0 0 14 14"><rect x=".5" y=".5" width="13" height="13" rx="2.500" fill="#c4c4c4" stroke="#a8a8a8"/><path d="M4 4l6 6M10 4l-6 6" stroke="#fff" stroke-width="2"/></svg></div>
<div class="tab" style="left:1154px;width:255px"><svg class="abs" style="left:15px;top:3px" width="16" height="16" viewBox="0 0 16 16"><rect x=".5" y=".5" width="15" height="14" fill="#f4faff" stroke="#3c78e8"/><rect x="0" y="0" width="16" height="2.500" fill="url(#gti)"/><path d="M4.500 4v10" stroke="#3858c8" stroke-width=".8" stroke-dasharray="1 1"/><path d="M3.500 5.500h2M3.500 8.500h2M3.500 11.500h2" stroke="#2040b0" stroke-width="1.600"/><path d="M7.500 5.500h5.500M7.500 8.500h5.500M7.500 11.500h5.500" stroke="#3050c0" stroke-width="1"/></svg><span style="left:105px">Enums</span><svg class="abs" style="left:223px;top:5px" width="14" height="14" viewBox="0 0 14 14"><rect x=".5" y=".5" width="13" height="13" rx="2.500" fill="#c4c4c4" stroke="#a8a8a8"/><path d="M4 4l6 6M10 4l-6 6" stroke="#fff" stroke-width="2"/></svg></div>
<div class="tab" style="left:1409px;width:94px;border-right:none"><svg class="abs" style="left:15px;top:3px" width="17" height="17" viewBox="0 0 17 17"><rect x=".5" y=".5" width="14" height="12" fill="#fff" stroke="#3c78e8"/><rect x="0" y="0" width="15" height="3" fill="url(#gti)"/><rect x="6.500" y="5.500" width="9" height="10" fill="#fff" stroke="#103a80"/><path d="M8.500 7.500h5M8.500 9.500h5M8.500 11.500h5M8.500 13.500h5" stroke="#1828c0" stroke-width="1"/><path d="M1.500 5.500h2.500v-2l4 3.300l-4 3.300v-2h-2.500z" fill="#28b828" stroke="#0a5c0a" stroke-width=".6"/></svg></div>
<div id="gview" class="abs abs-c"><div id="node" class="abs-c"><div id="hl"></div><div id="codetxt" class="code"><span class="g">; Segment type: Pure code</span>
<span class="g">; Segment permissions: Read/Write/Execute</span>
<span class="b">UPX0 segment para public 'CODE' use32</span>
<span class="b">assume cs:UPX0</span>
<span class="g">;org 931000h</span>
<span class="b">assume es:nothing, ss:nothing, ds:UPX0, fs:nothing, gs:nothing</span>


<span class="g">; Attributes: bp-based frame</span>

<span class="b">; int __cdecl main(int argc, const char **argv, const char **envp)</span>
<span class="b">_main proc near</span>

<span class="k">argc</span><span class="n">= dword ptr  </span><span class="k">8</span>
<span class="k">argv</span><span class="n">= dword ptr  </span><span class="k">0Ch</span>
<span class="k">envp</span><span class="n">= dword ptr  </span><span class="k">10h</span>

<span class="n">push    ebp</span>
<span class="n">mov     ebp, esp</span>
<span class="n">push    offset aHelloWorld </span><span class="g">; "hello world!"</span>
<span class="n">call    sub_931060</span>
<span class="n">add     esp, </span><span class="k">4</span>
<span class="n">xor     eax, eax</span>
<span class="n">pop     ebp</span>
<span class="n">retn</span>
<span class="b">_main endp</span></div></div></div>
<div id="status" class="abs">
<span style="left:1.5px">100.00%</span>
<span style="left:64px">(-358,605)</span>
<span style="left:150px">(62,46)</span>
<span style="left:211.7px">00000400</span>
<span style="left:281.6px">00931000: _main</span>
<span style="left:407.5px">(Synchronized with Hex View-1)</span>
<i style="left:59px"></i>
<i style="left:145px"></i>
<i style="left:207px"></i>
<i style="left:277px"></i>
<i style="left:403px"></i>
<i style="left:649px"></i>
</div>
</body>
</html>
